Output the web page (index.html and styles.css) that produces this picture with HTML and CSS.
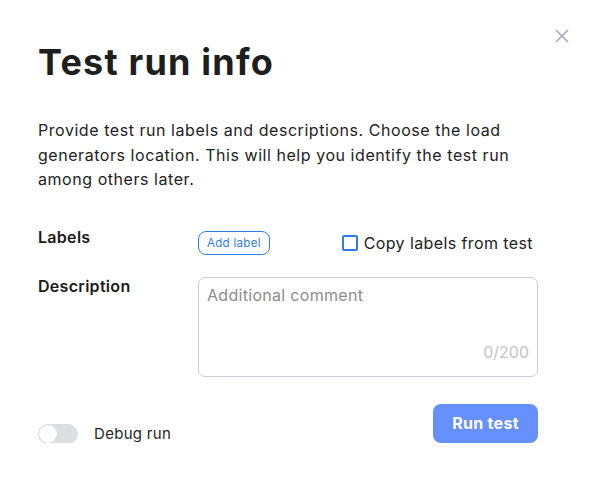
FILE: index.html
```html
<!DOCTYPE html>
<html>
<head>
<meta charset="utf-8">
<link rel="stylesheet" href="styles.css">
</head>
<body>
<div class="modal">
  <button class="close" aria-label="Close">
    <svg width="14" height="14" viewBox="0 0 14 14"><path d="M1 1L13 13M13 1L1 13" stroke="#a3abba" stroke-width="1.6" fill="none"/></svg>
  </button>
  <h1 class="title">Test run info</h1>
  <p class="intro">Provide test run labels and descriptions. Choose the load generators location. This will help you identify the test run among others later.</p>
  <div class="form">
    <div class="field-label labels-label">Labels</div>
    <div class="labels-row">
      <button class="add-label">Add label</button>
      <label class="copy"><span class="checkbox"></span><span>Copy labels from test</span></label>
    </div>
    <div class="field-label desc-label">Description</div>
    <div class="textarea">
      <span class="placeholder">Additional comment</span>
      <span class="counter">0/200</span>
    </div>
  </div>
  <div class="footer">
    <div class="debug">
      <span class="toggle"><span class="knob"></span></span>
      <span class="debug-text">Debug run</span>
    </div>
    <button class="run">Run test</button>
  </div>
</div>
</body>
</html>
```
FILE: styles.css
```css
html, body {
  margin: 0;
  padding: 0;
  background: #ffffff;
}
body {
  font-family: "Inter", "Noto Sans", sans-serif;
  color: #1f1f1f;
}
.modal {
  position: relative;
  width: 500px;
  padding: 40px 60px 0 38px;
}
.close {
  position: absolute;
  top: 29px;
  right: 29px;
  border: 0;
  background: transparent;
  padding: 0;
  width: 14px;
  height: 14px;
  display: flex;
}
.title {
  margin: 0;
  font-size: 36px;
  font-weight: 700;
  line-height: 44px;
  letter-spacing: 1.2px;
  color: #1e1e1e;
}
.intro {
  margin: 34px 0 0;
  font-size: 16px;
  line-height: 24.5px;
  letter-spacing: 0.55px;
  color: #222;
}
.form {
  display: grid;
  grid-template-columns: 160px 340px;
  row-gap: 22px;
  margin-top: 35px;
}
.field-label {
  font-size: 16px;
  font-weight: 600;
  line-height: 20px;
  letter-spacing: 0.3px;
  color: #1a1a1a;
}
.labels-label { margin-top: 0; }
.desc-label { margin-top: -1px; }
.labels-row {
  display: flex;
  align-items: center;
  justify-content: space-between;
  padding-top: 4px;
}
.add-label {
  height: 24px;
  padding: 0 8px;
  border: 1px solid #2f7de1;
  border-radius: 8px;
  background: #fff;
  color: #2f7de1;
  font-family: inherit;
  font-size: 11.5px;
  letter-spacing: 0.3px;
  line-height: 22px;
}
.copy {
  display: flex;
  align-items: center;
  gap: 6px;
  font-size: 16px;
  letter-spacing: 0.4px;
  color: #222;
  margin-right: 5px;
}
.checkbox {
  width: 12px;
  height: 12px;
  border: 2px solid #2f7de1;
  border-radius: 2px;
  box-sizing: content-box;
}
.textarea {
  position: relative;
  box-sizing: border-box;
  height: 100px;
  border: 1px solid #c9ccd6;
  border-radius: 7px;
  padding: 6px 8px 7px;
  display: flex;
  flex-direction: column;
  justify-content: space-between;
}
.placeholder {
  font-size: 16px;
  color: #8c8c8c;
  line-height: 22px;
  letter-spacing: 0.3px;
}
.counter {
  align-self: flex-end;
  font-size: 16px;
  color: #c2c5cc;
  line-height: 22px;
  margin-bottom: 6px;
}
.footer {
  display: flex;
  justify-content: space-between;
  align-items: flex-end;
  margin-top: 27px;
}
.debug {
  display: flex;
  align-items: center;
  gap: 16px;
  margin-bottom: -1px;
}
.toggle {
  width: 40px;
  height: 20px;
  border-radius: 10px;
  background: #dcdee2;
  display: flex;
  align-items: center;
  padding: 0 1px;
  box-sizing: border-box;
}
.knob {
  width: 18px;
  height: 18px;
  border-radius: 50%;
  background: #fff;
  box-shadow: 0 0 0 0.5px #d0d2d6;
}
.debug-text {
  font-size: 15px;
  letter-spacing: 0.3px;
  color: #1f1f1f;
}
.run {
  width: 105px;
  height: 39px;
  border: 0;
  border-radius: 8px;
  background: #6690fb;
  color: #fff;
  font-family: inherit;
  font-size: 16px;
  font-weight: 700;
  letter-spacing: 0.3px;
}
```
